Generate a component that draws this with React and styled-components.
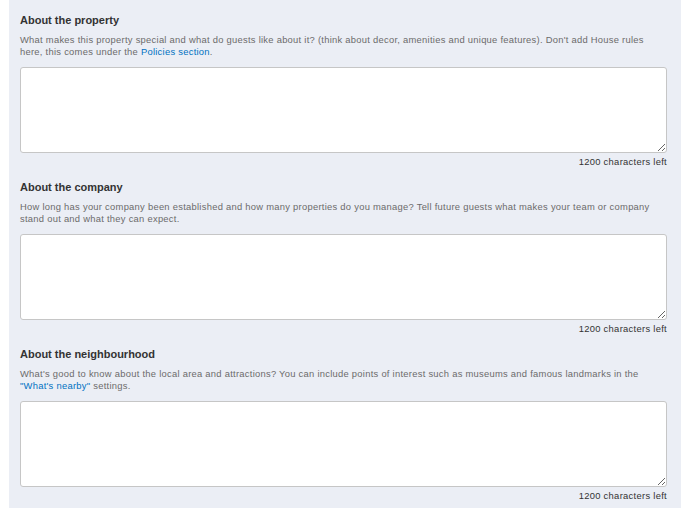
import React from 'react';
import styled, { createGlobalStyle } from 'styled-components';

const GlobalStyle = createGlobalStyle`
  html, body {
    margin: 0;
    padding: 0;
    background: #fff;
    font-family: "Liberation Sans", Arial, sans-serif;
  }
`;

const Panel = styled.div`
  margin-left: 9px;
  min-height: 508px;
  box-sizing: border-box;
  background: #ebeef5;
  padding: 13px 14px 0 11px;
`;

const Section = styled.section`
  display: flex;
  flex-direction: column;
  margin-bottom: 12px;
`;

const Title = styled.h3`
  margin: 0 0 7px;
  font-size: 11px;
  line-height: 14px;
  font-weight: 700;
  color: #333;
`;

const Description = styled.p`
  margin: 0 0 9px;
  font-size: 9.4px;
  line-height: 12px;
  letter-spacing: 0.27px;
  color: #6b6b6b;
`;

const Link = styled.a`
  color: #0071c2;
  text-decoration: none;
`;

const TextArea = styled.textarea`
  display: block;
  box-sizing: border-box;
  width: 100%;
  height: 86px;
  margin: 0;
  border: 1px solid #c6c6c6;
  border-radius: 3px;
  background: #fff;
  resize: vertical;
  font-family: inherit;
`;

const Counter = styled.div`
  margin-top: 3px;
  text-align: right;
  font-size: 9.4px;
  line-height: 12px;
  letter-spacing: 0.3px;
  color: #333;
`;

const sections = [
  {
    title: 'About the property',
    desc: (
      <>
        What makes this property special and what do guests like about it? (think about decor,
        amenities and unique features). Don't add House rules here, this comes under the{' '}
        <Link href="#">Policies section</Link>.
      </>
    ),
  },
  {
    title: 'About the company',
    desc: (
      <>
        How long has your company been established and how many properties do you manage? Tell
        future guests what makes your team or company stand out and what they can expect.
      </>
    ),
  },
  {
    title: 'About the neighbourhood',
    desc: (
      <>
        What's good to know about the local area and attractions? You can include points of
        interest such as museums and famous landmarks in the <Link href="#">"What's nearby"</Link>{' '}
        settings.
      </>
    ),
  },
];

const App = () => (
  <>
    <GlobalStyle />
    <Panel>
      {sections.map((s) => (
        <Section key={s.title}>
          <Title>{s.title}</Title>
          <Description>{s.desc}</Description>
          <TextArea />
          <Counter>1200 characters left</Counter>
        </Section>
      ))}
    </Panel>
  </>
);

export default App;
